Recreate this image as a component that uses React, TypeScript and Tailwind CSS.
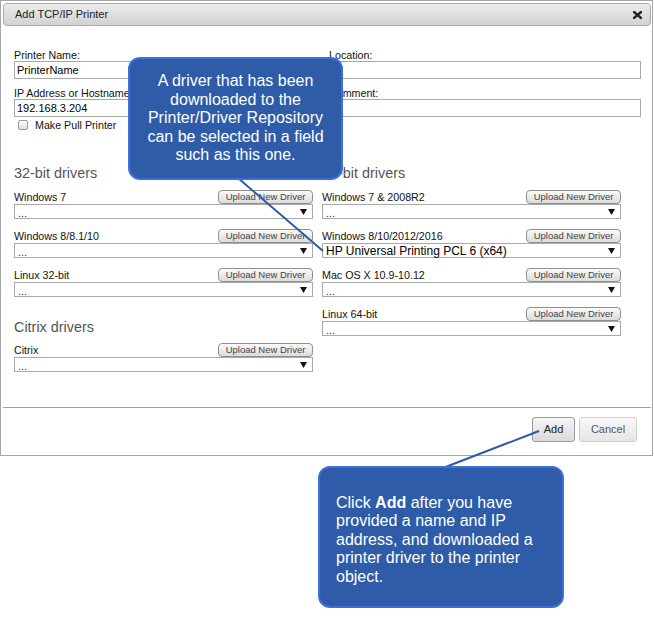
const DriverRow = ({ label, value }: { label: string; value?: string }) => (
  <div className="mb-[10px]">
    <div className="flex h-[14px] items-center justify-between">
      <span className="text-[10.7px] leading-[14px] text-[#111]">{label}</span>
      <button className="flex h-[14px] w-[95px] items-center justify-center rounded-[4px] border border-[#8f8f8f] bg-linear-to-b from-[#fafafa] to-[#dcdcdc] text-[9.5px] leading-none text-[#444]">
        Upload New Driver
      </button>
    </div>
    <div className="flex h-[15px] items-center justify-between border border-[#a9a9a9] bg-white pl-[3px] pr-[5px]">
      {value ? (
        <span className="text-[12px] leading-none text-black">{value}</span>
      ) : (
        <span className="pt-[3px] text-[11px] leading-none text-[#333]">...</span>
      )}
      <svg width="7" height="6" viewBox="0 0 7 6">
        <polygon points="0,0 7,0 3.5,6" fill="#111" />
      </svg>
    </div>
  </div>
);

const Heading = ({ children, className }: { children: string; className?: string }) => (
  <div className={`h-[20px] text-[14.4px] leading-[20px] text-[#555] ${className ?? ""}`}>{children}</div>
);

export default function App() {
  return (
    <div
      className="relative h-[619px] w-[654px] overflow-hidden bg-white"
      style={{ fontFamily: '"Liberation Sans", Arial, sans-serif' }}
    >
      {/* dialog */}
      <div className="flex h-[456px] w-[653px] flex-col border border-[#a6a6a6] bg-white">
        <div className="ml-[2px] mr-[1px] mt-[2px] flex h-[23px] items-center justify-between rounded-[4px] border border-[#aaa] bg-linear-to-b from-[#ececec] to-[#d2d2d2] pl-[11px] pr-[8px]">
          <span className="text-[11px] text-[#222]">Add TCP/IP Printer</span>
          <svg width="9" height="8" viewBox="0 0 9 8">
            <path d="M1 1 L8 7 M8 1 L1 7" stroke="#222" strokeWidth="2.4" strokeLinecap="square" />
          </svg>
        </div>

        <div className="pl-[13px] pt-[24px]">
          <div className="flex gap-[13px]">
            <div className="w-[302px]">
              <div className="h-[11px] text-[10.7px] leading-[11px] text-[#111]">Printer Name:</div>
              <div className="flex h-[18px] items-center border border-[#a9a9a9] px-[2px] text-[11px] text-black">
                PrinterName
              </div>
              <div className="mt-[9px] h-[11px] text-[10.7px] leading-[11px] text-[#111]">IP Address or Hostname:</div>
              <div className="flex h-[18px] items-center border border-[#a9a9a9] px-[2px] text-[11px] text-black">
                192.168.3.204
              </div>
            </div>
            <div className="w-[312px]">
              <div className="h-[11px] text-[10.7px] leading-[11px] text-[#111]">Location:</div>
              <div className="h-[18px] border border-[#a9a9a9]" />
              <div className="mt-[9px] h-[11px] text-[10.7px] leading-[11px] text-[#111]">Comment:</div>
              <div className="h-[18px] border border-[#a9a9a9]" />
            </div>
          </div>
          <div className="mt-px flex h-[14px] items-center">
            <span className="ml-[4px] h-[10px] w-[10px] rounded-[2px] border border-[#999] bg-linear-to-b from-white to-[#e0e0e0]" />
            <span className="ml-[7px] text-[10.7px] text-[#111]">Make Pull Printer</span>
          </div>

          <div className="mt-[31px] flex gap-[9px]">
            <div className="w-[299px]">
              <Heading className="mb-[7px]">32-bit drivers</Heading>
              <DriverRow label="Windows 7" />
              <DriverRow label="Windows 8/8.1/10" />
              <DriverRow label="Linux 32-bit" />
              <Heading className="mb-[6px] mt-[20px]">Citrix drivers</Heading>
              <DriverRow label="Citrix" />
            </div>
            <div className="w-[299px]">
              <Heading className="mb-[7px]">64-bit drivers</Heading>
              <DriverRow label="Windows 7 & 2008R2" />
              <DriverRow label="Windows 8/10/2012/2016" value="HP Universal Printing PCL 6 (x64)" />
              <DriverRow label="Mac OS X 10.9-10.12" />
              <DriverRow label="Linux 64-bit" />
            </div>
          </div>
        </div>

        <div className="ml-[2px] mr-[1px] mt-[25px] h-px bg-[#a0a0a0]" />

        <div className="mt-[9px] flex justify-end gap-[4px] pr-[15px]">
          <button className="h-[25px] w-[43px] rounded-[3px] border border-[#9a9a9a] bg-linear-to-b from-[#f6f6f6] to-[#dadada] text-[11px] text-[#222]">
            Add
          </button>
          <button className="h-[25px] w-[58px] rounded-[3px] border border-[#d0d0d0] bg-linear-to-b from-[#f8f8f8] to-[#e6e6e6] text-[11px] text-[#555]">
            Cancel
          </button>
        </div>
      </div>

      {/* connector lines */}
      <svg className="pointer-events-none absolute left-0 top-0" width="654" height="619">
        <line x1="238" y1="178" x2="323" y2="251" stroke="#2d5aa6" strokeWidth="2" />
        <line x1="443" y1="468" x2="539" y2="431" stroke="#2d5aa6" strokeWidth="2" />
      </svg>

      {/* callouts */}
      <div className="absolute left-[128px] top-[57px] flex h-[123px] w-[215px] items-center justify-center rounded-[12px] border-2 border-[#3e6fdb] bg-[#2e5ca8] text-center text-[16px] leading-[18.6px] text-white">
        <div>
          A driver that has been
          <br />
          downloaded to the
          <br />
          Printer/Driver Repository
          <br />
          can be selected in a field
          <br />
          such as this one.
        </div>
      </div>

      <div className="absolute left-[318px] top-[466px] h-[142px] w-[246px] rounded-[12px] border-2 border-[#3e6fdb] bg-[#2e5ca8] pl-[16px] pt-[26px] text-[16px] leading-[18.4px] text-white">
        Click <b>Add</b> after you have
        <br />
        provided a name and IP
        <br />
        address, and downloaded a
        <br />
        printer driver to the printer
        <br />
        object.
      </div>
    </div>
  );
}
